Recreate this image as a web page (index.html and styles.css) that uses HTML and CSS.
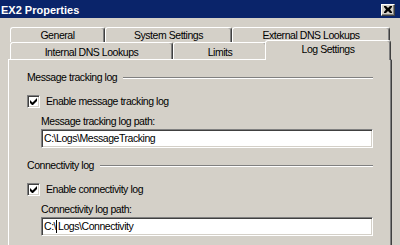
FILE: index.html
```html
<!DOCTYPE html>
<html lang="en">
  <head>
    <meta charset="UTF-8" />
    <title>EX2 Properties</title>
    <link rel="stylesheet" href="styles.css">
  </head>
  <body>
    <div class="window">
      <div class="titlebar">
        <span class="title">EX2 Properties</span>
        <span class="close">
          <svg width="8" height="7" viewBox="0 0 8 7">
            <path d="M0 0h2l2 2 2-2h2v1L6 3.5 8 6v1H6L4 5 2 7H0V6l2-2.5L0 1z" fill="#000" />
          </svg>
        </span>
      </div>
      <div class="body">
        <div class="tabs">
          <div class="tab-row back">
            <div class="tab tab-general">General</div>
            <div class="tab tab-system">System Settings</div>
            <div class="tab tab-external">External DNS Lookups</div>
          </div>
          <div class="tab-row front">
            <div class="tab tab-internal">Internal DNS Lookups</div>
            <div class="tab tab-limits">Limits</div>
            <div class="tab tab-log selected">Log Settings</div>
          </div>
        </div>
        <div class="panel">
          <div class="group">
            <div class="group-title"><span>Message tracking log</span></div>
            <div class="check">
              <span class="box">
                <svg width="7" height="7" viewBox="0 0 7 7">
                  <path d="M0 2v3l2 2h1l4-4V0L2.5 4.5z" fill="#000" />
                </svg>
              </span>
              Enable message tracking log
            </div>
            <div class="field-label">Message tracking log path:</div>
            <div class="textbox">C:\Logs\MessageTracking</div>
          </div>
          <div class="group">
            <div class="group-title"><span>Connectivity log</span></div>
            <div class="check">
              <span class="box">
                <svg width="7" height="7" viewBox="0 0 7 7">
                  <path d="M0 2v3l2 2h1l4-4V0L2.5 4.5z" fill="#000" />
                </svg>
              </span>
              Enable connectivity log
            </div>
            <div class="field-label">Connectivity log path:</div>
            <div class="textbox">C:\<span class="ibeam"></span>Logs\Connectivity</div>
          </div>
        </div>
      </div>
    </div>
  </body>
</html>
```

FILE: styles.css
```css
html,
body {
  margin: 0;
  padding: 0;
  height: 245px;
  overflow: hidden;
  font-family: "Liberation Sans", Arial, sans-serif;
  font-size: 10.5px;
  letter-spacing: -0.45px;
  color: #000000;
  background-color: #d4d0c8;
}
.window {
  width: 400px;
  height: 245px;
  background-color: #d4d0c8;
}
.titlebar {
  height: 18px;
  background-color: #0a246a;
  display: flex;
  align-items: center;
  justify-content: space-between;
  padding: 0 5px 0 1px;
}
.title {
  color: #ffffff;
  font-weight: bold;
  font-size: 11px;
  letter-spacing: 0;
  line-height: 14px;
  padding-top: 1px;
}
.close {
  width: 14px;
  height: 12px;
  box-sizing: border-box;
  background-color: #d4d0c8;
  border-top: 1px solid #ffffff;
  border-left: 1px solid #ffffff;
  border-right: 1px solid #404040;
  border-bottom: 1px solid #404040;
  box-shadow: inset -1px -1px #808080;
  display: flex;
  align-items: center;
  justify-content: center;
  margin-top: 1px;
}
.close svg {
  display: block;
  margin: 0 1px 1px 0;
}
.body {
  padding: 9px 8px 0 8px;
}
.tabs {
  padding-left: 2px;
}
.tab-row {
  display: flex;
}
.tab {
  box-sizing: border-box;
  background-color: #d4d0c8;
  border-top: 1px solid #ffffff;
  border-left: 1px solid #ffffff;
  border-right: 1px solid #404040;
  box-shadow: inset -1px 0 #808080;
  border-radius: 3px 3px 0 0;
  text-align: center;
  white-space: nowrap;
}
.back .tab {
  height: 15px;
  line-height: 14px;
}
.front .tab {
  height: 17px;
  line-height: 14px;
  padding-top: 2px;
}
.tab-general {
  width: 95px;
}
.tab-system {
  width: 127px;
}
.tab-external {
  width: 158px;
}
.tab-internal {
  width: 163px;
}
.tab-limits {
  width: 94px;
}
.front .tab.selected {
  width: 126px;
  height: 20px;
  margin-top: -2px;
  margin-left: -2px;
  margin-bottom: -1px;
  padding-top: 1px;
  position: relative;
  z-index: 1;
}
.panel {
  height: 186px;
  box-sizing: border-box;
  border-top: 1px solid #ffffff;
  border-left: 1px solid #ffffff;
  border-right: 1px solid #404040;
  box-shadow: inset -1px 0 #808080;
  padding: 10px 18px 0 18px;
}
.group {
  margin-bottom: 10px;
}
.group:last-child {
  margin-bottom: 0;
}
.group-title {
  display: flex;
  align-items: center;
  line-height: 14px;
  height: 14px;
}
.group-title::after {
  content: "";
  flex: 1;
  border-top: 1px solid #808080;
  border-bottom: 1px solid #ffffff;
  margin-left: 6px;
  margin-top: 1px;
  height: 0;
}
.check {
  display: flex;
  align-items: center;
  margin-top: 11px;
  height: 13px;
  line-height: 13px;
}
.box {
  width: 13px;
  height: 13px;
  box-sizing: border-box;
  background-color: #ffffff;
  border-top: 1px solid #808080;
  border-left: 1px solid #808080;
  border-right: 1px solid #ffffff;
  border-bottom: 1px solid #ffffff;
  box-shadow: inset 1px 1px #404040, inset -1px -1px #d4d0c8;
  display: flex;
  align-items: center;
  justify-content: center;
  margin-right: 6px;
}
.field-label {
  margin: 6px 0 1px 14px;
  line-height: 14px;
}
.textbox {
  margin-left: 14px;
  height: 19px;
  box-sizing: border-box;
  background-color: #ffffff;
  border-top: 1px solid #808080;
  border-left: 1px solid #808080;
  border-right: 1px solid #ffffff;
  border-bottom: 1px solid #ffffff;
  box-shadow: inset 1px 1px #404040, inset -1px -1px #d4d0c8;
  padding: 0 2px;
  line-height: 17px;
  white-space: nowrap;
}
.ibeam {
  display: inline-block;
  width: 1px;
  height: 13px;
  background-color: #000000;
  vertical-align: -3px;
  margin-right: 1px;
}
```
